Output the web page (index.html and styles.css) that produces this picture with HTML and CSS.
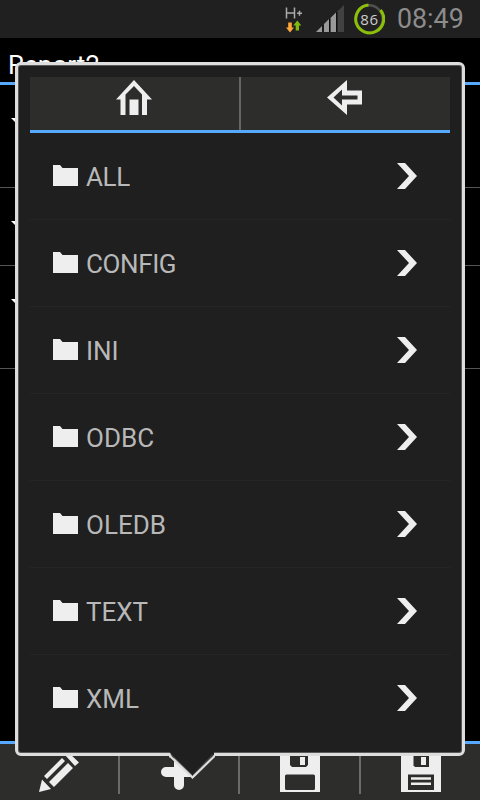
FILE: index.html
```html
<!DOCTYPE html>
<html lang="en">
<head>
<meta charset="utf-8">
<title>Report2</title>
<link rel="stylesheet" href="styles.css">
</head>
<body>
<svg class="symbols" aria-hidden="true">
  <symbol id="folder" viewBox="0 0 25 21"><path d="M0 0H7L9.5 3H25V21H0Z" fill="#eee"/></symbol>
  <symbol id="chevron" viewBox="0 0 20 26"><path d="M0 0H8L20 13L8 26H0L12 13Z" fill="#eee"/></symbol>
</svg>
<div class="screen">
  <header class="status">
    <svg class="network" viewBox="0 0 17 26" aria-hidden="true">
      <path d="M1.5 .5V11.5M9.5 .5V11.5M1 6H9M12 6.2H17M14.5 3.7V8.7" fill="none" stroke="#aaa" stroke-width="1.5"/>
      <path d="M3.2 15.5H6.8V20.5H9L5 25.5L1 20.5H3.2Z" fill="#ffa63a"/>
      <path d="M10.7 23.5H14V18.5H16.3L12.3 13.5L8.3 18.5H10.7Z" fill="#80b911"/>
    </svg>
    <svg class="signal" viewBox="0 0 28 27" aria-hidden="true">
      <path d="M0 27L28 0V27Z" fill="#424242"/>
      <path d="M0 27L6 21V27ZM8 19L13 14V27H8ZM14.5 13L20 7.5V27H14.5Z" fill="#999"/>
      <path d="M7 20V27M13.7 13.7V27M20.8 7V27" stroke="#080808" stroke-width="1.3"/>
    </svg>
    <div class="battery">
      <svg viewBox="0 0 32 32" aria-hidden="true">
        <circle cx="16" cy="16" r="13.7" fill="none" stroke="#505050" stroke-width="2.5"/>
        <path d="M27.5 7A14 14 0 1 1 15.5 2" fill="none" stroke="#8cc008" stroke-width="3"/>
      </svg>
      <span>86</span>
    </div>
    <time class="clock">08:49</time>
  </header>
  <h1 class="title">Report2</h1>
  <main class="report">
    <div class="entry tall"><i class="caret"></i></div>
    <div class="entry"><i class="caret"></i></div>
    <div class="entry tall"><i class="caret"></i></div>
  </main>
  <footer class="toolbar">
    <div class="tool"><svg viewBox="0 0 120 56" aria-hidden="true"><path d="M39 48L42 35.5L51 45ZM44 32L62 14L65 17L47 35ZM49 38L68 19L73 24L54 43ZM65 11L68 8L79 18.5L75 22Z" fill="#eee"/></svg></div>
    <div class="tool"><svg viewBox="0 0 120 56" aria-hidden="true"><path d="M59 13V41M46 28H72" stroke="#eee" stroke-width="10" stroke-linecap="round"/></svg></div>
    <div class="tool"><svg viewBox="0 0 120 56" aria-hidden="true"><path d="M40 8H80V48H40Z" fill="#eee"/><path d="M50 8H68V21L66 23H52L50 21Z" fill="#2d2d2c"/><path d="M60 13H65V21H60Z" fill="#eee"/><rect x="45" y="30.5" width="30" height="15.5" rx="1.5" fill="#2d2d2c"/></svg></div>
    <div class="tool"><svg viewBox="0 0 120 56" aria-hidden="true"><path d="M40 8H80V48H40Z" fill="#eee"/><path d="M52.5 8H68V23H54L52.5 21.5Z" fill="#2d2d2c"/><path d="M60 13H65V21H60Z" fill="#eee"/><path d="M47 30.5H73V46H47Z" fill="#2d2d2c"/><path d="M50 34.5H70M50 39.7H70" stroke="#eee" stroke-width="2.6"/></svg></div>
  </footer>
  <section class="popup">
    <nav class="tabs">
      <div class="tab"><svg viewBox="0 0 36 36" aria-hidden="true"><path d="M18 0L36 19.5H31V35H26V14.5L18 6L9.5 14.5V35H4.5V19.5H0ZM13.5 19.5H22.5V35H13.5Z" fill="#eee"/></svg></div>
      <div class="tab"><svg viewBox="0 0 36 36" aria-hidden="true"><path fill-rule="evenodd" d="M0 17.5L20 0V10.5H35V24.5H20V35ZM6.5 17.5L15 25.5V19.5H30.5V15.5H15V9.5Z" fill="#eee"/></svg></div>
    </nav>
    <ul class="list">
      <li class="row"><svg class="folder"><use href="#folder"/></svg><span class="tight">ALL</span><svg class="chevron"><use href="#chevron"/></svg></li>
      <li class="row"><svg class="folder"><use href="#folder"/></svg><span class="tight">CONFIG</span><svg class="chevron"><use href="#chevron"/></svg></li>
      <li class="row"><svg class="folder"><use href="#folder"/></svg><span>INI</span><svg class="chevron"><use href="#chevron"/></svg></li>
      <li class="row"><svg class="folder"><use href="#folder"/></svg><span>ODBC</span><svg class="chevron"><use href="#chevron"/></svg></li>
      <li class="row"><svg class="folder"><use href="#folder"/></svg><span>OLEDB</span><svg class="chevron"><use href="#chevron"/></svg></li>
      <li class="row"><svg class="folder"><use href="#folder"/></svg><span>TEXT</span><svg class="chevron"><use href="#chevron"/></svg></li>
      <li class="row"><svg class="folder"><use href="#folder"/></svg><span>XML</span><svg class="chevron"><use href="#chevron"/></svg></li>
    </ul>
    <svg class="tail" viewBox="0 0 48 28" aria-hidden="true"><path d="M2 0H46V3L24.5 24.5L3 3Z" fill="#1f1f1f"/><path d="M1 4.5H2.5L24.5 25.5L46 4.5H47" fill="none" stroke="#ddd" stroke-width="2.2"/><path d="M3 2.5L24.5 23.5L45 2.5" fill="none" stroke="#777" stroke-width=".7"/></svg>
  </section>
</div>
</body>
</html>
```

FILE: styles.css
```css
* { box-sizing: border-box; }

body {
  margin: 0;
  background: #000;
  font-family: Roboto, "Liberation Sans", sans-serif;
}

svg { display: block; }
.symbols { position: absolute; width: 0; height: 0; }

.screen {
  position: relative;
  display: flex;
  flex-direction: column;
  width: 480px;
  height: 800px;
  overflow: hidden;
}

.status {
  display: flex;
  flex: none;
  height: 38px;
  padding-left: 285px;
  background: #202020;
}
.network { flex: none; width: 17px; height: 26px; margin: 7px 14px 0 0; }
.signal { flex: none; width: 28px; height: 27px; margin: 5px 9px 0 0; }
.battery { position: relative; flex: none; width: 32px; height: 32px; margin: 3px 12px 0 0; }
.battery span {
  position: absolute;
  inset: 0;
  color: #ccc;
  font: 15px/32px "Open Sans", sans-serif;
  letter-spacing: .7px;
  text-align: center;
  text-indent: 1px;
}
.clock { color: #8c8c8c; font-size: 26.8px; line-height: 38px; }

.title {
  flex: none;
  height: 47px;
  margin: 0;
  padding: 11px 8px 0;
  border-bottom: 3px solid #57a8ff;
  color: #fff;
  font-size: 26px;
  font-weight: 400;
  line-height: 33px;
}

.report { flex: 1; }
.entry { height: 78px; padding: 33px 0 0 11px; border-bottom: 1px solid #555; }
.entry.tall { height: 103px; }
.caret {
  display: block;
  width: 0;
  border: 7px solid transparent;
  border-top-color: #fff;
  border-bottom: 0;
}

.toolbar {
  display: grid;
  grid-template-columns: 120px 120px 121px 119px;
  flex: none;
  height: 59px;
  border-top: 3px solid #57a8ff;
  background: #2d2d2c;
}
.tool { height: 50px; border-right: 2px solid #6b6b6b; }
.tool:last-child { border: 0; }
.tool svg { width: 120px; height: 56px; }

.popup {
  position: absolute;
  top: 62px;
  left: 15px;
  width: 450px;
  height: 694px;
  padding: 12px;
  border: 3px solid #dedddd;
  border-radius: 6px;
  background: #1f1f1f;
  box-shadow: inset 0 0 0 1px #595959;
}
.tabs { display: flex; height: 56px; border-bottom: 3px solid #57a8ff; background: #2d2d2c; }
.tab { display: flex; flex: 1; justify-content: center; padding-top: 3px; }
.tab:first-child { border-right: 2px solid #666; }
.tab svg { width: 36px; height: 36px; margin-right: 1px; }

.list { margin: 0; padding: 0; list-style: none; }
.row {
  display: flex;
  height: 87px;
  padding: 0 33px 0 23px;
  border-bottom: 1px solid #252525;
  color: #b8b8b8;
  font-size: 26px;
  line-height: 88px;
}
.row:last-child { border: 0; }
.row span { margin-left: 8px; letter-spacing: 0; }
.row .tight { letter-spacing: -.4px; }
.folder { width: 25px; height: 21px; margin-top: 32px; }
.chevron { width: 20px; height: 26px; margin: 30px 0 0 auto; }

.tail { position: absolute; top: 687px; left: 150px; width: 48px; height: 28px; }
```
